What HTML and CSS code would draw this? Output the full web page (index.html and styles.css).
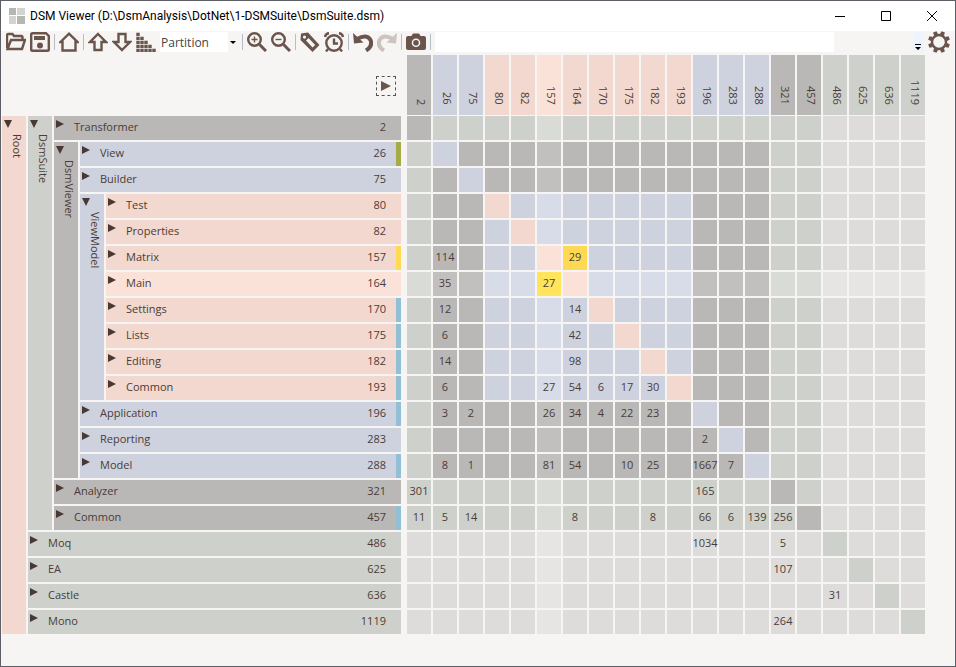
FILE: index.html
```html
<!DOCTYPE html>
<html lang="en">
<head>
<meta charset="utf-8">
<title>DSM Viewer</title>
<link rel="stylesheet" href="styles.css">
</head>
<body>
<div class="window">
  <header class="titlebar">
    <svg class="app-icon" viewBox="0 0 16 16" aria-hidden="true"><path fill="#b5b7b3" d="M0 0h7v7H0zM8 8h8v8H8z"/><path fill="#d2d4cf" d="M8 0h8v7H8zM0 8h7v8H0z"/></svg>
    <h1 class="title">DSM Viewer (D:\DsmAnalysis\DotNet\1-DSMSuite\DsmSuite.dsm)</h1>
    <div class="window-buttons">
      <button type="button" aria-label="Minimize"><svg viewBox="0 0 12 12"><path d="M1 6.500h10"/></svg></button>
      <button type="button" aria-label="Maximize"><svg viewBox="0 0 12 12"><path d="M1.500 1.500h9v9h-9z"/></svg></button>
      <button type="button" aria-label="Close"><svg viewBox="0 0 12 12"><path d="M1 1l10 10M11 1L1 11"/></svg></button>
    </div>
  </header>

  <div class="toolbar" role="toolbar" aria-label="Main">
    <button type="button" class="tool" aria-label="Open"><svg viewBox="0 0 20 20"><path class="line" d="M1 16V3.500Q1 2 2.500 2H6.500L8 4H15Q16.500 4 16.500 5.500V7.500M1.500 17L5 8H19L16 17Z"/></svg></button>
    <button type="button" class="tool" aria-label="Save"><svg viewBox="0 0 20 20"><path class="line" d="M1.200 2.500Q1.200 1.200 2.500 1.200H16L18.800 4V17.500Q18.800 18.800 17.500 18.800H2.500Q1.200 18.800 1.200 17.500Z"/><path class="fill" d="M4 4h11v4H4z"/><circle class="fill" cx="10" cy="13.500" r="3"/></svg></button>
    <span class="separator"></span>
    <button type="button" class="tool" aria-label="Home"><svg viewBox="0 0 20 20"><path class="line" d="M1.500 10L10 1.700L18.500 10H16.500V18.500H3.500V10Z"/></svg></button>
    <span class="separator"></span>
    <button type="button" class="tool" aria-label="Move up"><svg viewBox="0 0 20 20"><path class="line" d="M10 2L18 10H13.500V18H6.500V10H2Z"/></svg></button>
    <button type="button" class="tool" aria-label="Move down"><svg viewBox="0 0 20 20"><path class="line" d="M10 18L18 10H13.500V2H6.500V10H2Z"/></svg></button>
    <button type="button" class="tool" aria-label="Sort"><svg viewBox="0 0 20 20"><path class="bars" d="M2 20V0M6 20V4M10 20V8M14 20V12M18 20V16"/></svg></button>
    <label class="combo">
      <select aria-label="Sort algorithm"><option>Partition</option></select>
      <svg class="combo-arrow" viewBox="0 0 6 3"><path d="M0 0h6L3 3z"/></svg>
    </label>
    <span class="separator"></span>
    <button type="button" class="tool" aria-label="Zoom in"><svg viewBox="0 0 20 20"><circle class="line" cx="7.500" cy="7.500" r="6.300"/><path class="line thick" d="M12.500 12.500L19 19"/><path class="thin" d="M4.500 7.500h6M7.500 4.500v6"/></svg></button>
    <button type="button" class="tool" aria-label="Zoom out"><svg viewBox="0 0 20 20"><circle class="line" cx="7.500" cy="7.500" r="6.300"/><path class="line thick" d="M12.500 12.500L19 19"/><path class="thin" d="M4.500 7.500h6"/></svg></button>
    <span class="separator"></span>
    <button type="button" class="tool" aria-label="Bookmark"><svg viewBox="0 0 20 20"><path class="fill" fill-rule="evenodd" d="M1 1.500L8 .5L19.500 13L12.500 20L.5 8ZM4.500 3.500A1.600 1.600 0 1 0 4.500 6.700A1.600 1.600 0 1 0 4.500 3.500ZM8.500 6L6 8.500L12.500 15.500L15.200 13Z"/></svg></button>
    <button type="button" class="tool" aria-label="History"><svg viewBox="0 0 20 20"><circle class="line" cx="10" cy="11" r="7.700"/><path class="line" d="M1 5Q1.500 1.500 5 1.200M19 5Q18.500 1.500 15 1.200M10 6.500V11.500H14M4 17L2 19.500M16 17L18 19.500"/></svg></button>
    <span class="separator"></span>
    <button type="button" class="tool" aria-label="Undo"><svg viewBox="0 0 20 20"><path class="line heavy" d="M4 7Q14 1.500 17.500 8Q20 14 13 18.500"/><path class="fill" d="M0 1L1 11.500L10.500 10.500Z"/></svg></button>
    <button type="button" class="tool" aria-label="Redo" disabled><svg viewBox="0 0 20 20"><path class="line heavy" d="M16 7Q6 1.500 2.500 8Q0 14 7 18.500"/><path class="fill" d="M20 1L19 11.500L9.500 10.500Z"/></svg></button>
    <span class="separator"></span>
    <button type="button" class="tool" aria-label="Take snapshot"><svg viewBox="0 0 20 20"><path class="fill" fill-rule="evenodd" d="M2 4H5.500L7 1.500H13L14.500 4H18Q20 4 20 6V16Q20 18 18 18H2Q0 18 0 16V6Q0 4 2 4ZM10 6.500A4.300 4.300 0 1 0 10 15.100A4.300 4.300 0 1 0 10 6.500Z"/><circle class="fill" cx="10" cy="10.800" r="2.800"/></svg></button>
    <span class="separator"></span>
    <input class="search" type="text" aria-label="Search">
    <button type="button" class="overflow" aria-label="More tools"><svg viewBox="0 0 11 20"><path d="M2 12h6v1H2zM2 15h6l-3 3z"/></svg></button>
    <button type="button" class="tool settings" aria-label="Settings"><svg viewBox="-11 -11 22 22"><circle class="line" r="7"/><path id="tooth" class="fill" d="M-2.200 -7.500L-1.800 -11H1.800L2.200 -7.500Z" transform="rotate(22.500)"/><use href="#tooth" transform="rotate(45)"/><use href="#tooth" transform="rotate(90)"/><use href="#tooth" transform="rotate(135)"/><use href="#tooth" transform="rotate(180)"/><use href="#tooth" transform="rotate(225)"/><use href="#tooth" transform="rotate(270)"/><use href="#tooth" transform="rotate(315)"/></svg></button>
  </div>

  <main class="content">
    <section class="provider">
      <div class="corner"><button type="button" class="metrics" aria-label="Show metrics"><svg viewBox="0 0 10 10"><path d="M0 0L10 5L0 10Z"/></svg></button></div>
      <div class="tree" id="tree"></div>
    </section>
    <table class="matrix" id="matrix" aria-label="Dependency matrix"></table>
  </main>
</div>
<script src="script.js"></script>
</body>
</html>
```
FILE: styles.css
```css
:root {
  --pink: #f2d8ce;
  --green: #ced1cb;
  --gray: #b9b8b6;
  --blue: #ced2de;
  --none: #dddcdb;
  --paper: #f6f5f3;
  --brown: #6a544c;
  --text: #4a3c38;
}

* { box-sizing: border-box; }

body {
  margin: 0;
  font-family: "Open Sans", "Noto Sans", sans-serif;
  font-size: 11px;
  color: var(--text);
}

button {
  padding: 0;
  border: 0;
  background: none;
}

svg { display: block; }

.window {
  min-height: 100vh;
  border: 1px solid #5c5f66;
  background: var(--paper);
}

.titlebar {
  display: flex;
  align-items: center;
  height: 30px;
  padding-left: 8px;
  background: #fff;
}

.app-icon {
  width: 16px;
  height: 16px;
}

.title {
  flex: 1;
  margin: 0 0 0 5px;
  font-family: Roboto, "Open Sans", sans-serif;
  font-size: 12px;
  font-weight: 400;
  line-height: 16px;
  color: #000;
}

.window-buttons { display: flex; }

.window-buttons button {
  display: grid;
  place-items: center;
  width: 46px;
  height: 30px;
}

.window-buttons svg {
  width: 12px;
  height: 12px;
  fill: none;
  stroke: #000;
}

.toolbar {
  display: flex;
  align-items: center;
  gap: 4px;
  height: 24px;
  padding: 0 5px 2px;
}

.tool,
.tool svg {
  flex: none;
  width: 20px;
  height: 20px;
}

.tool:disabled { opacity: 0.3; }

.settings,
.settings svg {
  width: 22px;
  height: 22px;
}

.fill { fill: var(--brown); }

.line,
.thin,
.bars {
  fill: none;
  stroke: var(--brown);
  stroke-width: 2.4;
}

.thick { stroke-width: 3; }
.heavy { stroke-width: 4; }
.thin { stroke-width: 1.4; }

.bars {
  stroke-width: 3.4;
  stroke-dasharray: 3.2 0.8;
}

.separator {
  flex: none;
  width: 1px;
  height: 16px;
  background: #b8bcc4;
}

.combo {
  position: relative;
  flex: none;
  width: 78px;
}

.combo select {
  display: block;
  width: 100%;
  height: 20px;
  padding: 0 10px 0 1px;
  border: 0;
  appearance: none;
  background: linear-gradient(90deg, #fff 68px, transparent 68px);
  font: inherit;
  font-size: 12px;
  color: #444;
}

.combo-arrow {
  position: absolute;
  top: 9px;
  right: 2px;
  width: 6px;
  height: 3px;
}

.search {
  flex: 0 1 399px;
  min-width: 0;
  height: 20px;
  padding: 0 4px;
  border: 0;
  background: #fff;
  font: inherit;
}

.overflow {
  width: 11px;
  height: 20px;
  margin-left: auto;
  background: #eef4fc;
}

.content {
  display: grid;
  grid-template-columns: 399px auto;
  column-gap: 6px;
  justify-content: start;
  padding-left: 1px;
}

.corner {
  display: flex;
  justify-content: flex-end;
  align-items: center;
  height: 61px;
  padding-right: 5px;
}

.metrics {
  display: grid;
  place-items: center;
  width: 20px;
  height: 20px;
  border: 1px dashed #555;
}

.metrics svg {
  width: 10px;
  height: 10px;
  fill: var(--brown);
}

.tree,
.children {
  display: flex;
  flex: 1;
  flex-direction: column;
  gap: 2px;
}

.node {
  display: flex;
  gap: 2px;
}

.strip {
  width: 24px;
  padding: 4px 0 0 2px;
}

.toggle {
  display: block;
  width: 8px;
  height: 8px;
}

.toggle svg {
  width: 8px;
  height: 8px;
  fill: #4a3833;
}

.strip-label {
  width: 22px;
  padding-top: 6px;
  writing-mode: vertical-rl;
  line-height: 22px;
}

.strip-label span {
  display: block;
  margin-right: -2px;
}

.leaf {
  display: flex;
  height: 24px;
  line-height: 22px;
}

.leaf .toggle { margin: 4px 10px 0 2px; }

.leaf-name { flex: 1; }

.leaf-id { margin-right: 10px; }

.mark { width: 5px; }
.mark.provider-mark { background: #91bfd6; }
.mark.cyclic-mark { background: #ffd953; }
.mark.match-mark { background: #a5ab48; }

.matrix {
  table-layout: fixed;
  width: 520px;
  border-spacing: 0;
}

.matrix th,
.matrix td {
  height: 26px;
  padding: 0 0 2px;
  border: solid var(--paper);
  border-width: 0 2px 2px 0;
  text-align: center;
  line-height: 20px;
  white-space: nowrap;
}

.matrix td span {
  display: flex;
  justify-content: center;
}

.matrix thead th {
  height: 61px;
  padding: 0 0 10px 4px;
  border-bottom-width: 1px;
  font-weight: 400;
  vertical-align: bottom;
}

.matrix thead span {
  display: block;
  width: 20px;
  writing-mode: vertical-rl;
  line-height: 20px;
}

.pink { background-color: var(--pink); }
.green { background-color: var(--green); }
.gray { background-color: var(--gray); }
.blue { background-color: var(--blue); }
.none { background-color: var(--none); }
.cycle { background-color: #ffd953; }

.pink.hot { background-color: #fbe2d8; }
.green.hot { background-color: #d8dbd6; }
.gray.hot { background-color: #c1c0be; }
.blue.hot { background-color: #d8dce8; }
.none.hot { background-color: #e6e5e4; }
.cycle.hot { background-color: #ffe45c; }

.matrix tr:not(.hot-row) .cycle { background-color: #ffd953; }
```
FILE: script.js
```js
const leaf = (name, id, mark) => ({ name, id, mark });
const group = (name, children) => ({ name, children });

const root = group("Root", [
  group("DsmSuite", [
    leaf("Transformer", 2),
    group("DsmViewer", [
      leaf("View", 26, "match"),
      leaf("Builder", 75),
      group("ViewModel", [
        leaf("Test", 80),
        leaf("Properties", 82),
        leaf("Matrix", 157, "cyclic"),
        leaf("Main", 164),
        leaf("Settings", 170, "provider"),
        leaf("Lists", 175, "provider"),
        leaf("Editing", 182, "provider"),
        leaf("Common", 193, "provider")
      ]),
      leaf("Application", 196, "provider"),
      leaf("Reporting", 283),
      leaf("Model", 288, "provider")
    ]),
    leaf("Analyzer", 321),
    leaf("Common", 457, "provider")
  ]),
  leaf("Moq", 486),
  leaf("EA", 625),
  leaf("Castle", 636),
  leaf("Mono", 1119)
]);

// Weights by provider id, then consumer id.
const weights = {
  157: { 26: 114, 164: 29 },
  164: { 26: 35, 157: 27 },
  170: { 26: 12, 164: 14 },
  175: { 26: 6, 164: 42 },
  182: { 26: 14, 164: 98 },
  193: { 26: 6, 157: 27, 164: 54, 170: 6, 175: 17, 182: 30 },
  196: { 26: 3, 75: 2, 157: 26, 164: 34, 170: 4, 175: 22, 182: 23 },
  283: { 196: 2 },
  288: { 26: 8, 75: 1, 157: 81, 164: 54, 175: 10, 182: 25, 196: 1667, 283: 7 },
  321: { 2: 301, 196: 165 },
  457: { 2: 11, 26: 5, 75: 14, 164: 8, 182: 8, 196: 66, 283: 6, 288: 139, 321: 256 },
  486: { 196: 1034, 321: 5 },
  625: { 321: 107 },
  636: { 486: 31 },
  1119: { 321: 264 }
};

const colors = ["pink", "green", "gray", "blue", "pink"];
const selectedProvider = 164;
const selectedConsumer = 157;
const leaves = [];

const arrow = path => `<svg viewBox="0 0 8 8"><path d="${path}"/></svg>`;

function renderNode(node, depth, ancestors) {
  const color = colors[depth];
  if (!node.children) {
    leaves.push({ id: node.id, color, ancestors });
    const hot = node.id === selectedProvider ? " hot" : "";
    return `<div class="leaf ${color}${hot}">
      <button type="button" class="toggle" aria-label="Expand ${node.name}">${arrow("M0 0L8 4L0 8Z")}</button>
      <span class="leaf-name">${node.name}</span><span class="leaf-id">${node.id}</span>
      <span class="mark ${node.mark ? node.mark + "-mark" : ""}"></span></div>`;
  }
  const path = ancestors.concat(node.name);
  const inner = node.children.map(child => renderNode(child, depth + 1, path)).join("");
  return `<div class="node"><div class="strip ${color}">
    <button type="button" class="toggle" aria-label="Collapse ${node.name}">${arrow("M0 0H8L4 8Z")}</button>
    <div class="strip-label"><span>${node.name}</span></div></div>
    <div class="children">${inner}</div></div>`;
}

// A cell takes the colour of the deepest element that holds both sides.
function cellColor(row, column) {
  if (row.id === column.id) return row.color;
  let shared = 0;
  while (row.ancestors[shared] && row.ancestors[shared] === column.ancestors[shared]) shared++;
  return shared === 1 ? "none" : colors[shared - 1];
}

function renderCell(row, column) {
  const weight = (weights[row.id] || {})[column.id];
  const reverse = (weights[column.id] || {})[row.id];
  const color = weight && reverse ? "cycle" : cellColor(row, column);
  const hot = row.id === selectedProvider || column.id === selectedConsumer ? " hot" : "";
  return `<td class="${color}${hot}">${weight ? `<span>${weight}</span>` : ""}</td>`;
}

document.getElementById("tree").innerHTML = renderNode(root, 0, []);

const head = leaves.map(item =>
  `<th scope="col" class="${item.color}${item.id === selectedConsumer ? " hot" : ""}"><span>${item.id}</span></th>`).join("");
const body = leaves.map(row =>
  `<tr${row.id === selectedProvider ? ' class="hot-row"' : ""}>${leaves.map(column => renderCell(row, column)).join("")}</tr>`).join("");
document.getElementById("matrix").innerHTML = `<thead><tr>${head}</tr></thead><tbody>${body}</tbody>`;
```
